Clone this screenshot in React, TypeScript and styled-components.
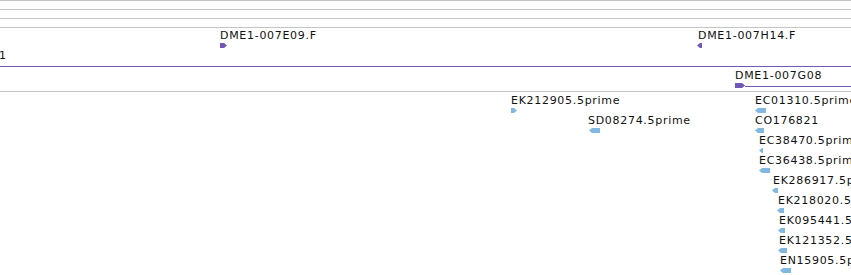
import React from "react";
import styled, { createGlobalStyle } from "styled-components";

const GlobalStyle = createGlobalStyle`
  html, body {
    margin: 0;
    padding: 0;
    background: #ffffff;
  }
  body {
    font-family: "DejaVu Sans", "Liberation Sans", sans-serif;
    overflow: hidden;
  }
`;

const Browser = styled.div`
  width: 851px;
  height: 275px;
  display: flex;
  flex-direction: column;
  overflow: hidden;
  background: #ffffff;
`;

const Ruler = styled.div`
  height: 8px;
  flex: none;
  border-top: 1px solid #c4c4c4;
`;

const Track = styled.div<{ $h: number; $last?: boolean; $pad: number }>`
  position: relative;
  flex: none;
  height: ${(p) => p.$h}px;
  border-top: 1px solid #c4c4c4;
  border-bottom: ${(p) => (p.$last ? "1px solid #c4c4c4" : "none")};
  padding-top: ${(p) => p.$pad}px;
  overflow: hidden;
`;

const Row = styled.div`
  position: relative;
  height: 20px;
`;

const Label = styled.span<{ $x: number }>`
  position: absolute;
  left: ${(p) => p.$x}px;
  top: 1px;
  font-size: 11px;
  line-height: 13px;
  letter-spacing: 0.7px;
  color: #111111;
  white-space: nowrap;
`;

const Glyph = styled.svg<{ $x: number }>`
  position: absolute;
  left: ${(p) => p.$x}px;
  top: 15px;
  display: block;
  overflow: visible;
`;

const Span = styled.div<{ $x: number; $color: string }>`
  position: absolute;
  left: ${(p) => p.$x}px;
  right: 0;
  top: 18px;
  border-top: 1px solid ${(p) => p.$color};
`;

const PURPLE = "#7257b8";
const BLUE = "#80b8df";

type Feature = {
  label: string;
  lx: number;
  gx: number;
  w: number;
  dir: "l" | "r";
  line?: boolean;
};

function arrow(w: number, dir: "l" | "r") {
  const t = Math.min(3, w - 1);
  if (dir === "l") return `0,2.5 ${t},0 ${w},0 ${w},5 ${t},5`;
  return `0,0 ${w - t},0 ${w},2.5 ${w - t},5 0,5`;
}

const FeatureGlyph: React.FC<{ f: Feature; color: string }> = ({ f, color }) => (
  <Glyph $x={f.gx} width={f.w} height={5} viewBox={`0 0 ${f.w} 5`}>
    <polygon points={arrow(f.w, f.dir)} fill={color} />
  </Glyph>
);

const cloneRows: Feature[][] = [
  [
    { label: "DME1-007E09.F", lx: 220, gx: 220, w: 7, dir: "r" },
    { label: "DME1-007H14.F", lx: 698, gx: 697, w: 5, dir: "l" },
  ],
  [{ label: "1", lx: -1, gx: 0, w: 0, dir: "r", line: true }],
  [{ label: "DME1-007G08", lx: 735, gx: 735, w: 10, dir: "r", line: true }],
];

const estRows: Feature[][] = [
  [
    { label: "EK212905.5prime", lx: 511, gx: 511, w: 6, dir: "r" },
    { label: "EC01310.5prime", lx: 755, gx: 755, w: 11, dir: "l" },
  ],
  [
    { label: "SD08274.5prime", lx: 588, gx: 589, w: 11, dir: "l" },
    { label: "CO176821", lx: 755, gx: 755, w: 9, dir: "l" },
  ],
  [{ label: "EC38470.5prime", lx: 759, gx: 759, w: 4, dir: "l" }],
  [{ label: "EC36438.5prime", lx: 759, gx: 759, w: 11, dir: "l" }],
  [{ label: "EK286917.5prime", lx: 773, gx: 772, w: 6, dir: "l" }],
  [{ label: "EK218020.5prime", lx: 778, gx: 777, w: 7, dir: "l" }],
  [{ label: "EK095441.5prime", lx: 779, gx: 778, w: 7, dir: "l" }],
  [{ label: "EK121352.5prime", lx: 779, gx: 778, w: 9, dir: "l" }],
  [{ label: "EN15905.5prime", lx: 780, gx: 780, w: 11, dir: "l" }],
];

const TrackRows: React.FC<{ rows: Feature[][]; color: string }> = ({ rows, color }) => (
  <>
    {rows.map((row, i) => (
      <Row key={i}>
        {row.map((f) => (
          <React.Fragment key={f.label}>
            <Label $x={f.lx}>{f.label}</Label>
            {f.w > 0 && <FeatureGlyph f={f} color={color} />}
            {f.line && <Span $x={f.gx + f.w} $color={color} />}
          </React.Fragment>
        ))}
      </Row>
    ))}
  </>
);

export default function App() {
  return (
    <Browser>
      <GlobalStyle />
      <Ruler />
      <Ruler />
      <Ruler />
      <Track $h={63} $pad={0}>
        <TrackRows rows={cloneRows} color={PURPLE} />
      </Track>
      <Track $h={182} $pad={1} $last>
        <TrackRows rows={estRows} color={BLUE} />
      </Track>
    </Browser>
  );
}
